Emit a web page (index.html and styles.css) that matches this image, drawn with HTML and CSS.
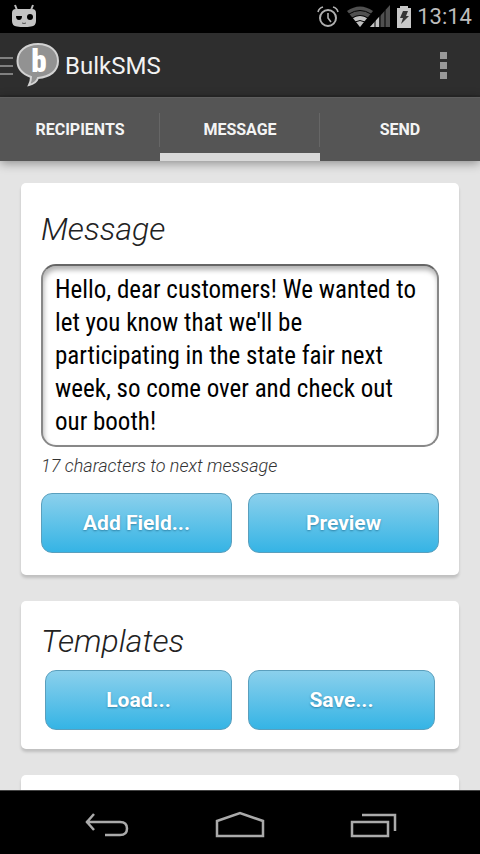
FILE: index.html
```html
<!DOCTYPE html>
<html lang="en">
<head>
<meta charset="utf-8">
<meta name="viewport" content="width=device-width, initial-scale=1">
<title>BulkSMS</title>
<link rel="stylesheet" href="styles.css">
</head>
<body>
<div class="screen">
  <div class="status">
    <svg class="robot" width="28" height="26" viewBox="0 0 28 26" aria-hidden="true">
      <path d="M5 1l2 5M23 1l-2 5" stroke="#bbb" stroke-width="2"/>
      <path d="M6 5h16q4 0 4 4v8q0 5-5 5.500-7 1-14 0-5-.5-5-5.500V9q0-4 4-4z" fill="#c4c4c4"/>
      <path d="M6 12h6q0 4-3 4t-3-4z" fill="#000"/>
      <circle cx="20" cy="13" r="3" fill="#000"/>
      <path d="M12 19q2 1 4 0" fill="none" stroke="#555"/>
    </svg>
    <div class="indicators">
      <svg class="alarm" width="22" height="24" viewBox="0 0 22 24" fill="none" stroke="#b0b0b0" aria-hidden="true">
        <circle cx="11" cy="13" r="8" stroke-width="2"/>
        <path d="M11 8v5l3 4M1 7q1-4 5-5M21 7q-1-4-5-5" stroke-width="1.600"/>
      </svg>
      <svg width="44" height="24" viewBox="0 0 44 24" aria-hidden="true">
        <path d="M0 6q13-9 26 0L13 22z" fill="#505050"/>
        <path d="M6 13q7-5 14 0l-7 9z" fill="#c0c0c0"/>
        <path d="M2 9q11-7 22 0M5 13q8-5 16 0M8 17q5-3 10 0" fill="none" stroke="#000"/>
        <path d="M43 0v22H23z" fill="#505050"/>
        <path d="M32 12v10h-9z" fill="#c4c4c4"/>
        <path d="M28 14v9M33 9v14M38 5v18" stroke="#000"/>
      </svg>
      <svg width="16" height="24" viewBox="0 0 16 24" aria-hidden="true">
        <path d="M4 3V1h8v2h3v20H1V3z" fill="#c8c8c8"/>
        <path d="M7 6h5l-2 5h3l-8 8 2-6H4z" fill="#333"/>
      </svg>
      <span class="clock">13:14</span>
    </div>
  </div>

  <header class="appbar">
    <button class="brand" aria-label="Open menu">
      <svg width="60" height="46" viewBox="0 0 60 46" aria-hidden="true">
        <path d="M0 17h13M0 25h13M0 33h13" stroke="#808080" stroke-width="2"/>
        <path d="M38 3C26 3 17.500 10 17.500 20c0 8 5 13 13.500 16 0 3-1 6-2 8 5-1 8-4 9-7 12-1 20-7 20-17C58 10 50 3 38 3z" fill="#929292" stroke="#d2d2d2" stroke-width="2"/>
        <text class="logo-letter" x="39" y="31" text-anchor="middle">b</text>
      </svg>
    </button>
    <h1>BulkSMS</h1>
    <button class="more" aria-label="More options"><i></i><i></i><i></i></button>
  </header>

  <nav class="tabs">
    <a href="#recipients">RECIPIENTS</a>
    <a href="#message" class="active" aria-current="page">MESSAGE</a>
    <a href="#send">SEND</a>
  </nav>

  <main>
    <section class="card">
      <h2><label for="text">Message</label></h2>
      <textarea id="text" rows="5" spellcheck="false">Hello, dear customers! We wanted to let you know that we'll be participating in the state fair next week, so come over and check out our booth!</textarea>
      <p class="hint">17 characters to next message</p>
      <div class="actions">
        <button>Add Field...</button>
        <button>Preview</button>
      </div>
    </section>
    <section class="card templates">
      <h2>Templates</h2>
      <div class="actions inset">
        <button>Load...</button>
        <button>Save...</button>
      </div>
    </section>
    <section class="card"></section>
  </main>

  <footer class="navbar">
    <button aria-label="Back">
      <svg width="48" height="28" viewBox="0 0 48 28" fill="none" stroke="#aaa" stroke-width="2.500" aria-hidden="true"><path d="M11 3L4 11l7 8M3 11h34q7 0 7 6.500t-7 6.500H22"/></svg>
    </button>
    <button aria-label="Home">
      <svg width="50" height="28" viewBox="0 0 50 28" fill="none" stroke="#aaa" stroke-width="2.500" aria-hidden="true"><path d="M2 10l23-8 23 8v15H2z"/></svg>
    </button>
    <button aria-label="Recent apps">
      <svg width="48" height="28" viewBox="0 0 48 28" fill="none" stroke="#aaa" stroke-width="2.500" aria-hidden="true"><path d="M3 11h36v14H3zM13 4h33v16"/></svg>
    </button>
  </footer>
</div>
</body>
</html>
```
FILE: styles.css
```css
* { box-sizing: border-box; }
body { margin: 0; font-family: Roboto, "Noto Sans", sans-serif; background: #000; }
h1, h2, p { margin: 0; }
button { font: inherit; border: 0; padding: 0; background: none; cursor: pointer; }
svg { display: block; flex: none; }

.screen { display: flex; flex-direction: column; height: 100vh; }

.status {
  display: flex; align-items: center; justify-content: space-between;
  height: 33px; flex: none; padding: 0 8px 0 10px; background: #000;
}
.indicators { display: flex; align-items: center; gap: 5px; }
.alarm { margin-right: 3px; }
.clock { color: #bdbdbd; font-size: 22px; line-height: 32px; }

.appbar {
  display: flex; align-items: center; gap: 5px;
  height: 64px; flex: none; padding-right: 32px;
  background: #2e2e2e; border-bottom: 2px solid #292929;
}
.appbar h1 { flex: 1; padding-top: 4px; color: #f2f2f2; font-size: 24px; font-weight: 400; }
.logo-letter { font: 900 31px "Roboto Condensed", Roboto, sans-serif; fill: #fff; }
.more { display: flex; flex-direction: column; gap: 3px; padding: 2px 1px 0; }
.more i { width: 7px; height: 7px; background: #999; }

.tabs {
  display: grid; grid-template-columns: repeat(3, 1fr);
  flex: none; height: 64px; background: #555; border-top: 1px solid #5e5e5e;
  position: relative; box-shadow: 0 2px 10px rgba(0, 0, 0, .4);
}
.tabs a {
  display: flex; align-items: center; justify-content: center;
  color: #f4f4f4; font-size: 16px; font-weight: 700; text-decoration: none;
  border-bottom: 8px solid transparent; border-top: 8px solid transparent;
  background: linear-gradient(#666, #666) right center / 1px 34px no-repeat;
}
.tabs a:last-child { background: none; }
.tabs .active { border-bottom-color: #d9d9d9; }

main {
  flex: 1; min-height: 0; overflow: hidden;
  display: flex; flex-direction: column; gap: 26px;
  padding: 22px 21px 0; background: #e4e4e4;
}
.card {
  flex: none; min-height: 60px; padding: 24px 20px 22px;
  background: #fff; border-radius: 5px; box-shadow: 0 3px 3px rgba(0, 0, 0, .16);
}
.templates { padding: 18px 20px 19px; }
h2 { color: #222; font-size: 32px; line-height: 45px; font-weight: 300; font-style: italic; }

textarea {
  display: block; width: 100%; margin-top: 12px; padding: 7px 12px; resize: none; overflow: hidden;
  border: 2px solid #888; border-top-color: #666; border-radius: 15px; outline: 0;
  box-shadow: inset 1px 4px 5px rgba(0, 0, 0, .3);
  color: #000; font: 400 25px/33px "Roboto Condensed", Roboto, sans-serif;
}
.hint { margin: 6px 0 14px; color: #333; font-size: 18px; line-height: 26px; font-weight: 300; font-style: italic; }

.actions { display: grid; grid-template-columns: 1fr 1fr; gap: 16px; }
.actions.inset { margin-top: 6px; padding: 0 4px; }
.actions button {
  height: 60px; border: 1px solid #5a9fbd; border-radius: 11px;
  background: linear-gradient(#8bd0ec, #35b4e5);
  color: #fff; font-size: 21px; font-weight: 700; text-shadow: 0 1px 2px rgba(0, 60, 90, .45);
}

.navbar {
  display: flex; align-items: center; justify-content: center; gap: 84px;
  flex: none; height: 64px; padding-top: 4px; background: #000; border-top: 1px solid #444;
}
```
